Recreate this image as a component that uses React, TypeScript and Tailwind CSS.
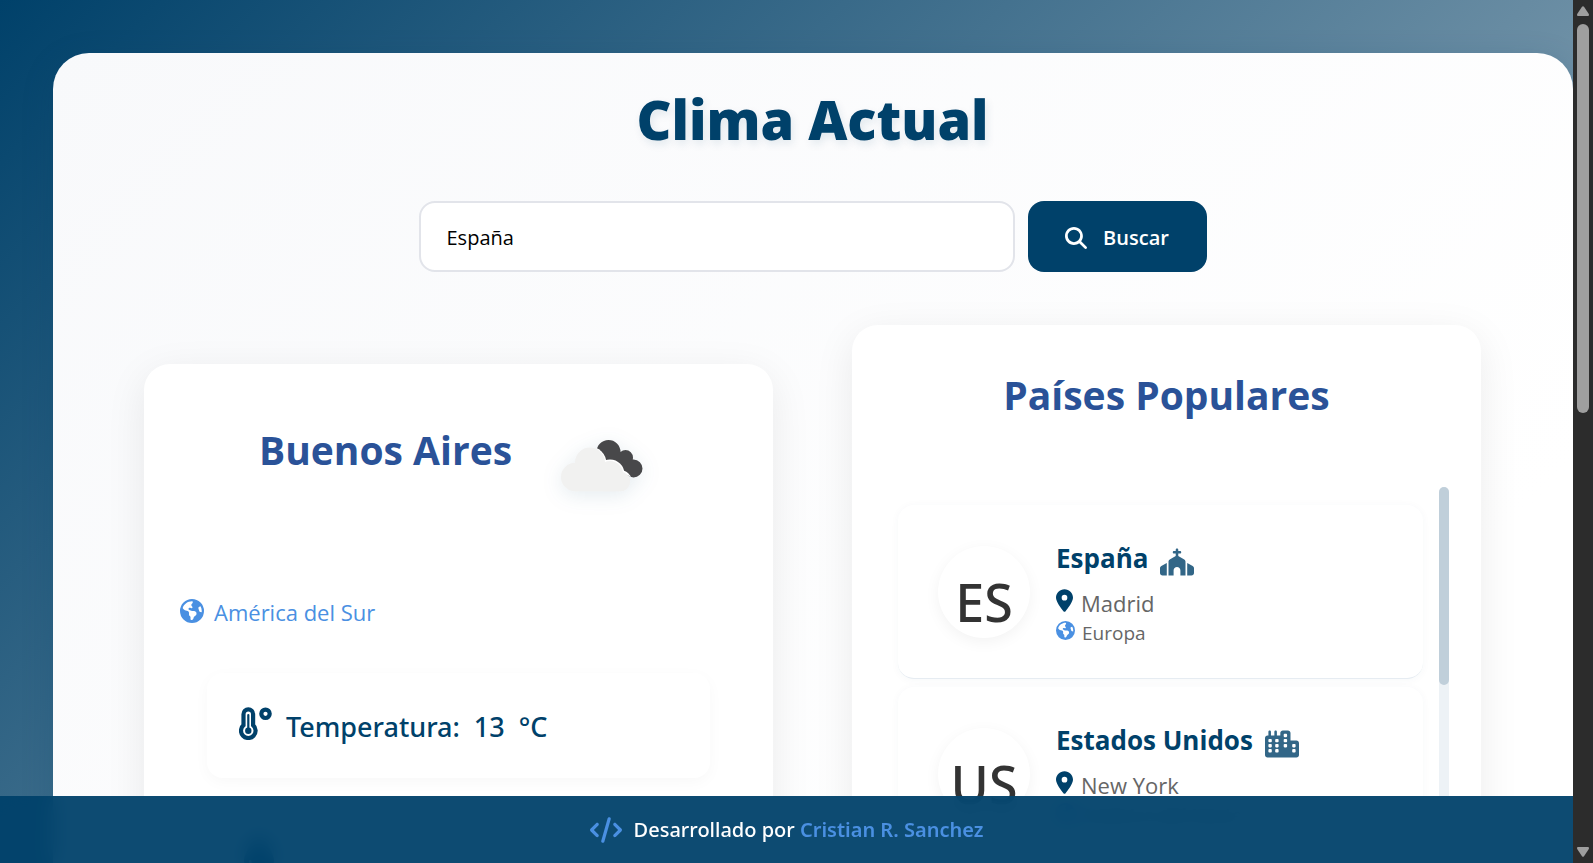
import {
  FaChurch,
  FaCity,
  FaCode,
  FaDroplet,
  FaEarthAmericas,
  FaLocationDot,
  FaMagnifyingGlass,
} from "react-icons/fa6";

const countries = [
  { code: "ES", name: "España", city: "Madrid", region: "Europa", Icon: FaChurch },
  { code: "US", name: "Estados Unidos", city: "New York", region: "América del Norte", Icon: FaCity },
];

function CloudIcon() {
  return (
    <svg
      viewBox="9 0 100 100"
      className="size-25 shrink-0 drop-shadow-[0_4px_10px_rgba(0,65,106,0.1)]"
      aria-hidden="true"
    >
      <defs>
        <clipPath id="back-cloud">
          <circle cx="65.500" cy="32" r="12" />
          <circle cx="82.500" cy="37.500" r="7.500" />
          <circle cx="90.500" cy="48.500" r="9" />
          <path d="M60 40 68 50 84 56 90 50 84 38 70 32Z" />
        </clipPath>
      </defs>
      <g clipPath="url(#back-cloud)">
        <path d="M40 10H110V80H40Z" fill="#48484a" />
        <g fill="#fff">
          <circle cx="47" cy="43" r="16.300" />
          <circle cx="67" cy="54" r="14.500" />
          <circle cx="77.500" cy="61.500" r="11.300" />
        </g>
      </g>
      <g fill="#f1f1f0">
        <circle cx="47" cy="42.500" r="15" />
        <circle cx="32.300" cy="57" r="14.300" />
        <circle cx="67" cy="54" r="13" />
        <circle cx="77.300" cy="61.500" r="9.800" />
        <path d="M32 48H72V71.300H32Z" />
        <path d="M60 60H78V71.300H60Z" />
      </g>
    </svg>
  );
}

function ThermometerIcon() {
  return (
    <svg viewBox="0 0 33 33" className="mb-1 size-[33px] shrink-0" fill="none" aria-hidden="true">
      <path
        d="M4.500 7.200a4.800 4.800 0 0 1 9.600 0v11a7.300 7.300 0 1 1-9.600 0Z"
        stroke="#00416a"
        strokeWidth="4.200"
      />
      <path d="M9.300 8v15" stroke="#00416a" strokeWidth="2.200" strokeLinecap="round" />
      <circle cx="9.300" cy="23.700" r="3.200" fill="#00416a" />
      <circle cx="26.500" cy="6.800" r="4.200" stroke="#00416a" strokeWidth="4.200" />
    </svg>
  );
}

function SearchForm() {
  return (
    <form className="mx-auto flex w-full max-w-[788px] gap-[13px]" onSubmit={(e) => e.preventDefault()}>
      <input
        type="text"
        aria-label="Buscar ciudad o país"
        defaultValue="España"
        className="h-[71px] min-w-0 flex-1 rounded-2xl border-2 border-[#e2e4ea] bg-white px-[26px] pt-0.5 text-xl text-black"
      />
      <button
        type="submit"
        className="flex h-[71px] w-[179px] items-center justify-center gap-4 rounded-2xl bg-[#00416a] pt-0.5 text-xl font-semibold text-white"
      >
        <FaMagnifyingGlass className="size-[22px]" />
        Buscar
      </button>
    </form>
  );
}

function WeatherCard() {
  return (
    <section className="mt-[39px] h-[1200px] min-w-0 rounded-[26px] bg-white px-9 pt-14 shadow-[0_10px_40px_rgba(0,0,0,0.08)]">
      <div className="flex justify-center gap-10 pr-1.5">
        <h2 className="pt-1.5 text-[39px] leading-[48px] font-bold text-[#2a5298]">Buenos Aires</h2>
        <CloudIcon />
      </div>
      <p className="mt-[76px] flex items-center gap-2.5 text-[22px] leading-8 text-[#4a90e2]">
        <FaEarthAmericas className="mb-0.5 size-6" />
        América del Sur
      </p>
      <div className="mx-[27px] mt-[45px] flex flex-col gap-6">
        <div className="flex h-[105px] items-center gap-3.5 rounded-2xl px-8 font-['Noto_Sans','Open_Sans',sans-serif] text-[27px] font-medium text-[#00416a] shadow-[0_4px_15px_rgba(0,0,0,0.03)]">
          <ThermometerIcon />
          <p className="flex gap-3.5 pt-1">
            <span>Temperatura:</span>
            <span>13</span>
            <span>°C</span>
          </p>
        </div>
        <div className="flex h-[105px] items-center rounded-2xl px-8 text-[#00416a] shadow-[0_4px_15px_rgba(0,0,0,0.03)]">
          <FaDroplet className="size-10" aria-label="Humedad" />
        </div>
      </div>
    </section>
  );
}

function CountriesCard() {
  return (
    <section className="h-[1200px] min-w-0 rounded-[26px] bg-white px-8 pt-[46px] shadow-[0_10px_40px_rgba(0,0,0,0.08)]">
      <h2 className="text-center text-[39px] leading-[48px] font-bold text-[#2a5298]">Países Populares</h2>
      <div className="mt-[68px] flex h-[420px] gap-4 overflow-hidden pl-3.5">
        <ul className="flex flex-1 flex-col gap-2 pt-[18px]">
          {countries.map(({ code, name, city, region, Icon }) => (
            <li key={code}>
              <a
                href={"#" + code}
                className="flex h-[174px] items-center gap-[26px] rounded-2xl border-b border-[#e6ecf2] px-10 shadow-[0_1px_8px_rgba(0,65,106,0.04)]"
              >
                <span className="flex size-[92px] shrink-0 items-center justify-center rounded-full bg-white pt-5 font-['Noto_Sans','Open_Sans',sans-serif] text-[52px] leading-none font-medium text-[#333] shadow-[0_4px_15px_rgba(0,0,0,0.05)]">
                  {code}
                </span>
                <span className="flex flex-col">
                  <span className="flex items-center gap-3 text-[26px] leading-9 font-bold text-[#00416a]">
                    {name}
                    <Icon className="mt-2 size-[34px] opacity-80" />
                  </span>
                  <span className="mt-2 flex items-center gap-2 text-[22px] leading-8 text-[#666]">
                    <FaLocationDot className="mb-1 h-[23px] w-[17px] text-[#00416a]" />
                    {city}
                  </span>
                  <span className="flex items-center gap-[7px] text-[19px] leading-7 text-[#666]">
                    <FaEarthAmericas className="mb-1 size-[19px] text-[#4a90e2]" />
                    {region}
                  </span>
                </span>
              </a>
            </li>
          ))}
        </ul>
        <div className="w-2.5 rounded-full bg-[#edf2f6]">
          <div className="h-[198px] rounded-full bg-[#c0cfda]" />
        </div>
      </div>
    </section>
  );
}

export default function App() {
  return (
    <div className="flex h-screen overflow-hidden font-['Open_Sans','Noto_Sans',sans-serif]">
      <div className="relative min-w-0 flex-1 overflow-hidden">
        <div className="min-h-[1817px] bg-[linear-gradient(135deg,#00416a,#e4e5e6)] pt-[53px] pl-[53px]">
          <main className="min-h-[1700px] rounded-[36px] bg-[linear-gradient(135deg,#f8f9fb,#ffffff_60%)] pt-[26px] pr-[92px] pl-[91px] shadow-[0_8px_32px_rgba(0,65,106,0.2)]">
            <h1 className="text-center text-[54px] leading-20 font-extrabold text-[#00416a] [text-shadow:2px_4px_8px_rgba(0,65,106,0.1)]">
              Clima Actual
            </h1>
            <div className="mt-[42px]">
              <SearchForm />
            </div>
            <div className="mt-[53px] grid grid-cols-2 items-start gap-[79px]">
              <WeatherCard />
              <CountriesCard />
            </div>
          </main>
        </div>
        <footer className="absolute inset-x-0 bottom-0 flex h-[67px] items-center justify-center gap-3 bg-[#00416a]/95 font-['Noto_Sans','Open_Sans',sans-serif] text-xl font-medium text-white backdrop-blur-[10px]">
          <FaCode className="size-8 text-[#4a90e2]" />
          <p>
            Desarrollado por{" "}
            <a href="#autor" className="font-semibold text-[#4a90e2]">
              Cristian R. Sanchez
            </a>
          </p>
        </footer>
      </div>
      <div className="flex w-5 shrink-0 flex-col items-center justify-between bg-[#2c2c2c] py-1.5" aria-hidden="true">
        <div className="flex flex-col items-center gap-2">
          <svg viewBox="0 0 12 10" className="h-2.5 w-3" fill="#9f9f9f">
            <path d="M5 .800a1.300 1.300 0 0 1 2 0L11.800 8c.4 1 0 2-1 2H1.200c-1 0-1.400-1-1-2Z" />
          </svg>
          <div className="h-[389px] w-3 rounded-full bg-[#9f9f9f]" />
        </div>
        <svg viewBox="0 0 12 10" className="h-2.5 w-3" fill="#9f9f9f">
          <path d="M5 9.200a1.300 1.300 0 0 0 2 0L11.800 2c.4-1 0-2-1-2H1.200c-1 0-1.400 1-1 2Z" />
        </svg>
      </div>
    </div>
  );
}
